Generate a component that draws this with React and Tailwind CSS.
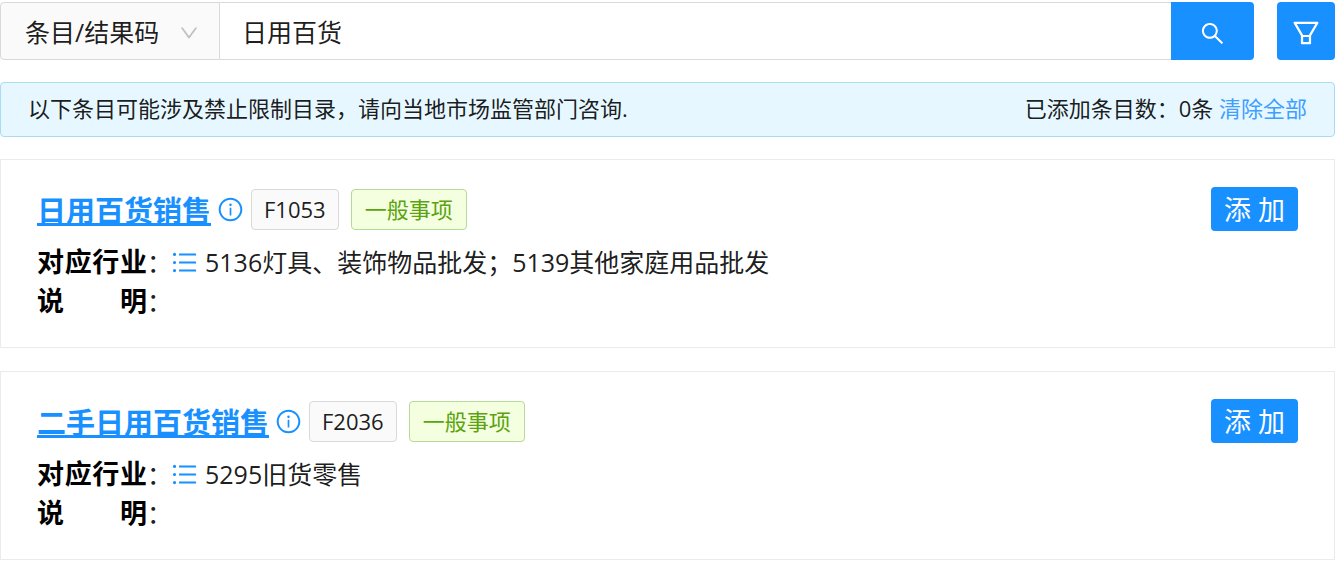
import React, { useState } from "react";
import {
  AiOutlineDown,
  AiOutlineFilter,
  AiOutlineInfoCircle,
  AiOutlineSearch,
  AiOutlineUnorderedList,
} from "react-icons/ai";

const entries = [
  {
    code: "F1053",
    name: "日用百货销售",
    type: "一般事项",
    industry: "5136灯具、装饰物品批发；5139其他家庭用品批发",
    note: "",
  },
  {
    code: "F2036",
    name: "二手日用百货销售",
    type: "一般事项",
    industry: "5295旧货零售",
    note: "",
  },
];

function SearchBar({ keyword, onChange }) {
  return (
    <form className="flex h-[58px]" onSubmit={(e) => e.preventDefault()}>
      <div className="relative w-[220px] shrink-0">
        <select
          aria-label="搜索类型"
          className="h-full w-full appearance-none rounded-l-sm border border-[#d9d9d9] bg-[#fafafa] pt-1 pl-6 text-[25px] text-black/90 outline-none"
        >
          <option>条目/结果码</option>
        </select>
        <AiOutlineDown className="pointer-events-none absolute top-5 right-5 text-[22px] text-[#bfbfbf]" />
      </div>
      <input
        type="text"
        aria-label="关键字"
        value={keyword}
        onChange={onChange}
        className="min-w-0 flex-1 border-y border-[#d9d9d9] bg-white px-[22px] pt-1 text-[25px] text-black/90 outline-none"
      />
      <button
        type="submit"
        aria-label="搜索"
        className="flex w-[83px] shrink-0 items-center justify-center rounded-r-sm bg-[#1890ff] pt-1 text-[27px] text-white"
      >
        <AiOutlineSearch />
      </button>
      <button
        type="button"
        aria-label="筛选"
        className="ml-[23px] flex w-[58px] shrink-0 items-center justify-center rounded-sm bg-[#1890ff] pt-1 text-[32px] text-white"
      >
        <AiOutlineFilter />
      </button>
    </form>
  );
}

function Row({ label, children }) {
  return (
    <div className="flex h-[39px] items-center text-[25px]">
      <dt className="flex items-center">
        <span className="w-[110px] text-[27px] font-bold text-black [text-align-last:justify]">
          {label}
        </span>
        ：
      </dt>
      <dd className="flex items-center gap-1.5">{children}</dd>
    </div>
  );
}

function EntryCard({ entry, onAdd }) {
  return (
    <li className="flex items-start justify-between border border-[#ebebeb] bg-white px-9 pt-[27px] pb-[26px]">
      <div>
        <div className="flex h-11 items-center">
          <a
            href="#"
            className="pt-1 text-[29px] leading-[44px] font-bold text-[#1890ff] underline decoration-[3px] underline-offset-1 [text-decoration-skip-ink:none]"
          >
            {entry.name}
          </a>
          <AiOutlineInfoCircle className="ml-1.5 text-[27px] text-[#1890ff]" />
          <span className="ml-[7px] h-[41px] rounded border border-[#d9d9d9] bg-[#fafafa] px-3 text-[22px] leading-[39px]">
            {entry.code}
          </span>
          <span className="ml-3 h-[41px] rounded border border-[#b7d99a] bg-[#f4ffdf] px-[13px] text-[22px] leading-[39px] text-[#5ba30f]">
            {entry.type}
          </span>
        </div>
        <dl className="mt-3">
          <Row label="对应行业">
            <AiOutlineUnorderedList className="-ml-0.5 text-[29px] text-[#1890ff]" />
            {entry.industry}
          </Row>
          <Row label="说明">{entry.note}</Row>
        </dl>
      </div>
      <button
        type="button"
        onClick={onAdd}
        className="h-11 w-[87px] shrink-0 rounded-sm bg-[#1890ff] pt-0.5 text-[27px] leading-[42px] text-white"
      >
        添 加
      </button>
    </li>
  );
}

function App() {
  const [keyword, setKeyword] = useState("日用百货");
  const [added, setAdded] = useState([]);

  const handleAdd = (code) => {
    if (!added.includes(code)) {
      setAdded([...added, code]);
    }
  };

  return (
    <main className="flex flex-col gap-[22px] pt-0.5 font-['Open_Sans','Noto_Sans_CJK_SC',sans-serif] text-black/90">
      <SearchBar
        keyword={keyword}
        onChange={(e) => setKeyword(e.target.value)}
      />
      <div className="flex h-[55px] items-center justify-between rounded-sm border border-[#a9dcf0] bg-[#e6f7ff] px-[27px] pb-0.5 text-[22px]">
        <p>以下条目可能涉及禁止限制目录，请向当地市场监管部门咨询.</p>
        <p>
          已添加条目数：{added.length}条{" "}
          <button
            type="button"
            onClick={() => setAdded([])}
            className="text-[#409eff]"
          >
            清除全部
          </button>
        </p>
      </div>
      <ul className="flex flex-col gap-[23px]">
        {entries.map((entry) => (
          <EntryCard
            key={entry.code}
            entry={entry}
            onAdd={() => handleAdd(entry.code)}
          />
        ))}
      </ul>
    </main>
  );
}

export default App;
